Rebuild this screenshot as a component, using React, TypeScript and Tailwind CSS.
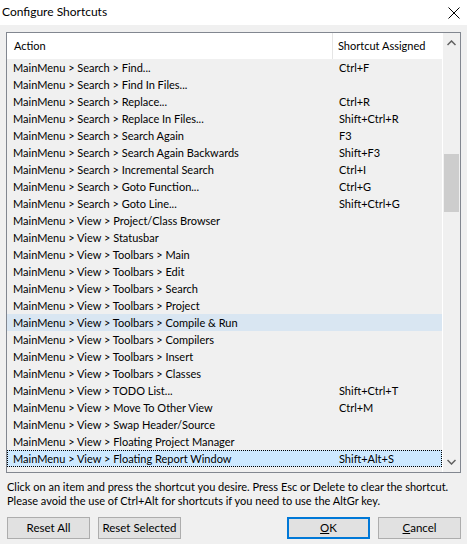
import React from "react";

// rows shown in the shortcut list
const rows: [string, string][] = [
  ["MainMenu > Search > Find...", "Ctrl+F"],
  ["MainMenu > Search > Find In Files...", ""],
  ["MainMenu > Search > Replace...", "Ctrl+R"],
  ["MainMenu > Search > Replace In Files...", "Shift+Ctrl+R"],
  ["MainMenu > Search > Search Again", "F3"],
  ["MainMenu > Search > Search Again Backwards", "Shift+F3"],
  ["MainMenu > Search > Incremental Search", "Ctrl+I"],
  ["MainMenu > Search > Goto Function...", "Ctrl+G"],
  ["MainMenu > Search > Goto Line...", "Shift+Ctrl+G"],
  ["MainMenu > View > Project/Class Browser", ""],
  ["MainMenu > View > Statusbar", ""],
  ["MainMenu > View > Toolbars > Main", ""],
  ["MainMenu > View > Toolbars > Edit", ""],
  ["MainMenu > View > Toolbars > Search", ""],
  ["MainMenu > View > Toolbars > Project", ""],
  ["MainMenu > View > Toolbars > Compile & Run", ""],
  ["MainMenu > View > Toolbars > Compilers", ""],
  ["MainMenu > View > Toolbars > Insert", ""],
  ["MainMenu > View > Toolbars > Classes", ""],
  ["MainMenu > View > TODO List...", "Shift+Ctrl+T"],
  ["MainMenu > View > Move To Other View", "Ctrl+M"],
  ["MainMenu > View > Swap Header/Source", ""],
  ["MainMenu > View > Floating Project Manager", ""],
  ["MainMenu > View > Floating Report Window", "Shift+Alt+S"],
];

const HOVER = 15;
const SELECTED = 23;

const Btn: React.FC<{ children: React.ReactNode; primary?: boolean }> = ({ children, primary }) => (
  <button
    className={
      primary
        ? "w-[83px] h-[22px] shrink-0 whitespace-nowrap bg-[#e1e1e1] border-2 border-[#0078d7] text-black text-[11.5px]"
        : "w-[83px] h-[22px] shrink-0 whitespace-nowrap bg-[#e1e1e1] border border-[#adadad] text-black text-[11.5px]"
    }
  >
    {children}
  </button>
);

export default function App() {
  return (
    <div
      className="w-[467px] h-[544px] bg-[#f0f0f0] flex flex-col text-[11px] text-black overflow-hidden"
      style={{ fontFamily: 'Lato, "Noto Sans", sans-serif' }}
    >
      {/* title bar */}
      <div className="h-[25px] shrink-0 bg-white flex items-center justify-between pl-[2px] pr-[7px]">
        <span className="text-[12px] -mt-[2px]">Configure Shortcuts</span>
        <svg width="12" height="12" viewBox="0 0 12 12">
          <path d="M0.5 0.5 L11.5 11.5 M11.5 0.5 L0.5 11.5" stroke="#000" strokeWidth="1" />
        </svg>
      </div>

      {/* list */}
      <div className="mt-[7px] mx-[6px] h-[441px] shrink-0 border border-[#828790] flex overflow-hidden">
        <div className="flex-1 flex flex-col overflow-hidden">
          <div className="h-[26px] bg-white flex items-center shrink-0">
            <div className="w-[326px] pl-[7px] border-r border-[#e5e5e5] h-full flex items-center">Action</div>
            <div className="pl-[5px]">Shortcut Assigned</div>
          </div>
          {rows.map(([action, key], i) => (
            <div
              key={i}
              className={
                i === SELECTED
                  ? "h-[17px] shrink-0 flex items-center bg-[#cce8ff] border border-dotted border-black"
                  : i === HOVER
                  ? "h-[17px] shrink-0 flex items-center bg-[#d9e6f2] border border-transparent"
                  : "h-[17px] shrink-0 flex items-center border border-transparent"
              }
            >
              <div className="w-[326px] pl-[5px] whitespace-nowrap leading-none">{action}</div>
              <div className="pl-[5px] whitespace-nowrap leading-none">{key}</div>
            </div>
          ))}
        </div>
        {/* scrollbar */}
        <div className="w-[18px] border-l border-white flex flex-col items-center shrink-0">
          <svg className="mt-[7px]" width="9" height="6" viewBox="0 0 9 6">
            <path d="M0.5 5 L4.5 1 L8.5 5" fill="none" stroke="#606060" strokeWidth="1.5" />
          </svg>
          <div className="mt-[108px] w-[15px] h-[58px] bg-[#cdcdcd]" />
          <div className="flex-1" />
          <svg className="mb-[7px]" width="9" height="6" viewBox="0 0 9 6">
            <path d="M0.5 1 L4.5 5 L8.5 1" fill="none" stroke="#606060" strokeWidth="1.5" />
          </svg>
        </div>
      </div>

      {/* hint text */}
      <div className="mt-[7px] px-[7px] leading-[14px] whitespace-nowrap">
        <div>Click on an item and press the shortcut you desire. Press Esc or Delete to clear the shortcut.</div>
        <div>Please avoid the use of Ctrl+Alt for shortcuts if you need to use the AltGr key.</div>
      </div>

      {/* buttons */}
      <div className="mt-[9px] px-[7px] flex">
        <div className="flex gap-[8px]">
          <Btn>Reset All</Btn>
          <Btn>Reset Selected</Btn>
        </div>
        <div className="ml-auto mr-[-1px] flex gap-[8px]">
          <Btn primary>
            <span className="underline">O</span>K
          </Btn>
          <Btn>
            <span className="underline">C</span>ancel
          </Btn>
        </div>
      </div>
    </div>
  );
}
